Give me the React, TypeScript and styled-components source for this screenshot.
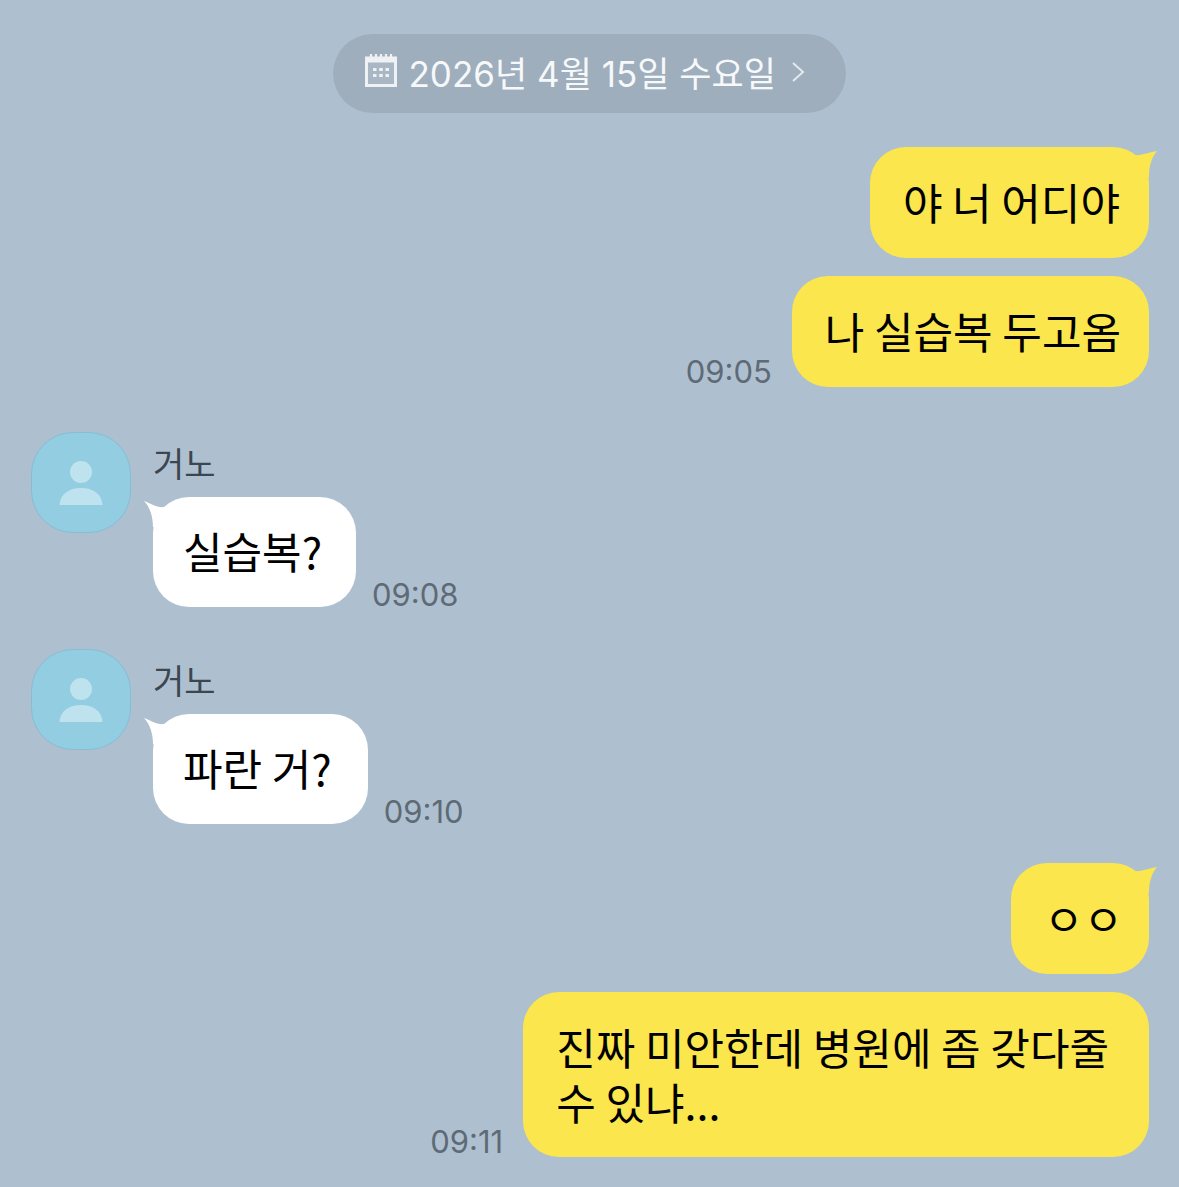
import React from 'react'
import styled, { createGlobalStyle } from 'styled-components'

const GlobalStyle = createGlobalStyle`
  html, body {
    margin: 0;
    padding: 0;
    background: #aec0cf;
  }
  body {
    font-family: 'Inter', 'Noto Sans CJK KR', sans-serif;
  }
`

const CalendarIcon = () => (
  <CalendarSvg viewBox="0 0 32 34" fill="none">
    <rect x="1.5" y="5" width="29" height="27.500" fill="#a9b7c5" stroke="#eef2f5" strokeWidth="3" />
    <rect x="1.5" y="5" width="29" height="4.500" fill="#eef2f5" />
    <path d="M6 1v4M11 1v4M16 1v4M21 1v4M26 1v4" stroke="#eef2f5" strokeWidth="2.200" />
    <path
      d="M8 15h3.500v3h-3.500zM14.250 15h3.500v3h-3.500zM20.500 15h3.500v3h-3.500zM8 21h3.500v3h-3.500zM14.250 21h3.500v3h-3.500zM20.500 21h3.500v3h-3.500z"
      fill="#eef2f5"
    />
  </CalendarSvg>
)

const ProfileAvatar = () => (
  <Avatar>
    <svg width="44" height="45" viewBox="0 0 44 45">
      <circle cx="22" cy="12" r="11" fill="#bfe2ef" />
      <path d="M0.500 45C1 34 10 28 22 28s21 6 21.500 17z" fill="#bfe2ef" />
    </svg>
  </Avatar>
)

const TailRight = () => (
  <TailSvg $side="right" viewBox="0 0 32 30">
    <path d="M32 4C25 5 16 9 8 8L0 30L24 30C24 20 26 11 32 4z" fill="#fbe64d" />
  </TailSvg>
)

const TailLeft = () => (
  <TailSvg $side="left" viewBox="0 0 32 30">
    <path d="M0 4C6 6 13 11 20 10C23 9.500 26 7 28 5L32 30L9 30C9 20 6 10 0 4z" fill="#ffffff" />
  </TailSvg>
)

const App: React.FC = () => {
  return (
    <Page>
      <GlobalStyle />
      <DatePill>
        <CalendarIcon />
        <DateText>2026년 4월 15일 수요일</DateText>
        <Chevron viewBox="0 0 14 22" fill="none">
          <path d="M2 2l10 9-10 9" stroke="#e3e9ee" strokeWidth="2" />
        </Chevron>
      </DatePill>

      <MineGroup $top={34}>
        <MineRow>
          <MineBubble $padRight={29}>
            <TailRight />
            <BubbleText>야 너 어디야</BubbleText>
          </MineBubble>
        </MineRow>
        <MineRow>
          <Time>09:05</Time>
          <MineBubble $padRight={28}>
            <BubbleText>나 실습복 두고옴</BubbleText>
          </MineBubble>
        </MineRow>
      </MineGroup>

      <OtherGroup $top={45}>
        <ProfileAvatar />
        <OtherBody>
          <Name>거노</Name>
          <OtherRow>
            <OtherBubble $padRight={34}>
              <TailLeft />
              <BubbleText>실습복?</BubbleText>
            </OtherBubble>
            <OtherTime>09:08</OtherTime>
          </OtherRow>
        </OtherBody>
      </OtherGroup>

      <OtherGroup $top={42}>
        <ProfileAvatar />
        <OtherBody>
          <Name>거노</Name>
          <OtherRow>
            <OtherBubble $padRight={36}>
              <TailLeft />
              <BubbleText>파란 거?</BubbleText>
            </OtherBubble>
            <OtherTime>09:10</OtherTime>
          </OtherRow>
        </OtherBody>
      </OtherGroup>

      <MineGroup $top={39}>
        <MineRow>
          <MineBubble $padRight={26}>
            <TailRight />
            <BubbleText>ㅇㅇ</BubbleText>
          </MineBubble>
        </MineRow>
        <MineRow>
          <Time>09:11</Time>
          <MineBubble $padRight={40} $tall>
            <BubbleText>
              진짜 미안한데 병원에 좀 갖다줄
              <br />수 있냐...
            </BubbleText>
          </MineBubble>
        </MineRow>
      </MineGroup>
    </Page>
  )
}

export default App

const Page = styled.div`
  width: 1179px;
  height: 1187px;
  box-sizing: border-box;
  padding: 34px 30px 0 31px;
  background: #aec0cf;
  display: flex;
  flex-direction: column;
  overflow: hidden;
`

const DatePill = styled.div`
  align-self: center;
  width: 513px;
  height: 79px;
  margin-right: 2px;
  box-sizing: border-box;
  padding-left: 32px;
  border-radius: 40px;
  background: #9eaebd;
  display: flex;
  align-items: center;
`

const CalendarSvg = styled.svg`
  width: 32px;
  height: 34px;
  margin-top: -7px;
  flex: none;
`

const DateText = styled.span`
  margin-left: 12px;
  margin-top: -4px;
  font-size: 35px;
  color: #f6f8fa;
  white-space: nowrap;
`

const Chevron = styled.svg`
  width: 14px;
  height: 22px;
  margin-left: 15px;
  margin-top: -3px;
  flex: none;
`

const MineGroup = styled.section<{ $top: number }>`
  margin-top: ${({ $top }) => $top}px;
  display: flex;
  flex-direction: column;
  gap: 18px;
`

const MineRow = styled.div`
  display: flex;
  justify-content: flex-end;
  align-items: flex-end;
  gap: 20px;
`

const Bubble = styled.div<{ $padRight: number }>`
  position: relative;
  box-sizing: border-box;
  padding-top: 26px;
  padding-right: ${({ $padRight }) => $padRight}px;
  border-radius: 36px;
`

const BubbleText = styled.div`
  position: relative;
  font-family: 'Noto Sans CJK KR', sans-serif;
  font-size: 43px;
  line-height: 55px;
  color: #000;
  white-space: nowrap;
`

const MineBubble = styled(Bubble)<{ $tall?: boolean }>`
  background: #fbe64d;
  height: ${({ $tall }) => ($tall ? 165 : 111)}px;
  padding-top: 27px;
  padding-left: 33px;
`

const OtherBubble = styled(Bubble)`
  background: #fff;
  height: 110px;
  padding-left: 30px;
`

const TailSvg = styled.svg<{ $side: 'left' | 'right' }>`
  position: absolute;
  top: 0;
  ${({ $side }) => ($side === 'right' ? 'right: -8px;' : 'left: -9px;')}
  width: 32px;
  height: 30px;
`

const Time = styled.span`
  font-size: 31px;
  line-height: 30px;
  color: #5e6a76;
  white-space: nowrap;
`

const OtherTime = styled(Time)`
  margin-bottom: -3px;
`

const OtherGroup = styled.section<{ $top: number }>`
  margin-top: ${({ $top }) => $top}px;
  display: flex;
  gap: 22px;
  align-items: flex-start;
`

const Avatar = styled.div`
  width: 100px;
  height: 101px;
  box-sizing: border-box;
  flex: none;
  border-radius: 42px;
  background: #93cde2;
  border: 1.5px solid #86bdd3;
  display: flex;
  align-items: center;
  justify-content: center;
`

const OtherBody = styled.div`
  display: flex;
  flex-direction: column;
`

const Name = styled.div`
  height: 65px;
  padding-top: 9px;
  box-sizing: border-box;
  font-family: 'Noto Sans CJK KR', sans-serif;
  font-size: 34px;
  line-height: 44px;
  color: #3c4650;
`

const OtherRow = styled.div`
  display: flex;
  align-items: flex-end;
  gap: 16px;
`
